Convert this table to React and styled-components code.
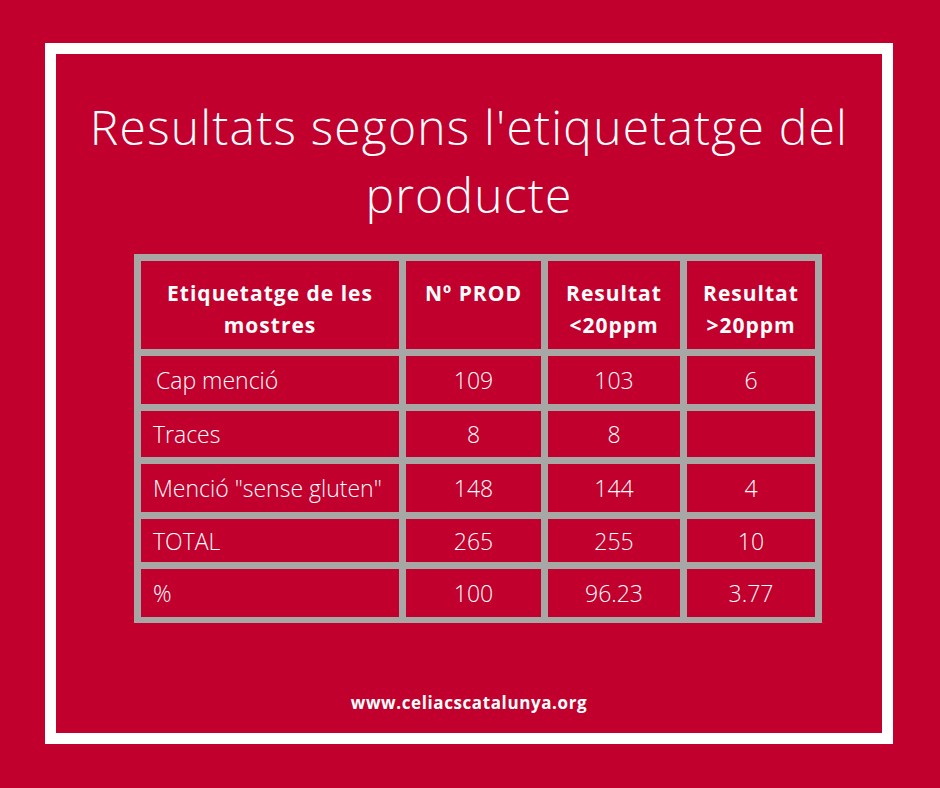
import React from 'react'
import styled, { createGlobalStyle } from 'styled-components'

const RED = '#c1002d'
const GRID = '#a7a7a5'

const GlobalStyle = createGlobalStyle`
  html, body {
    margin: 0;
    padding: 0;
    background: ${RED};
  }
  body {
    width: 940px;
    height: 788px;
    overflow: hidden;
    font-family: 'Open Sans', 'Lato', sans-serif;
    color: #fff;
  }
`

const ROWS = [
  { label: 'Cap menció', prod: '109', low: '103', high: '6', indent: 15 },
  { label: 'Traces', prod: '8', low: '8', high: '' },
  { label: 'Menció "sense gluten"', prod: '148', low: '144', high: '4' },
  { label: 'TOTAL', prod: '265', low: '255', high: '10' },
  { label: '%', prod: '100', low: '96.23', high: '3.77' },
]

function App() {
  return (
    <>
      <GlobalStyle />
      <Page>
        <Frame>
          <Title>
            Resultats segons l'etiquetatge del
            <br />
            producte
          </Title>
          <Table>
            <HeadCell>Etiquetatge de les mostres</HeadCell>
            <HeadCell>Nº PROD</HeadCell>
            <HeadCell>Resultat &lt;20ppm</HeadCell>
            <HeadCell>Resultat &gt;20ppm</HeadCell>
            {ROWS.map((row, index) => (
              <React.Fragment key={index}>
                <LabelCell $indent={row.indent}>{row.label}</LabelCell>
                <NumCell>{row.prod}</NumCell>
                <NumCell>{row.low}</NumCell>
                <NumCell>{row.high}</NumCell>
              </React.Fragment>
            ))}
          </Table>
          <Footer>www.celiacscatalunya.org</Footer>
        </Frame>
      </Page>
    </>
  )
}

export default App

const Page = styled.div`
  padding: 43px 0 0 45px;
`

const Frame = styled.div`
  box-sizing: border-box;
  width: 848px;
  height: 701px;
  border: 11px solid #fff;
  display: flex;
  flex-direction: column;
`

const Title = styled.h1`
  margin: 39px 0 0;
  font-size: 48px;
  font-weight: 300;
  line-height: 68px;
  letter-spacing: 1.2px;
  text-align: center;
`

const Table = styled.div`
  display: grid;
  grid-template-columns: 258px 135px 132px 128px;
  grid-template-rows: 88px 48px 46px 48px 43px 48px;
  column-gap: 7px;
  row-gap: 7px;
  align-self: flex-start;
  margin: 25px 0 0 78px;
  padding: 7px 7px 6px;
  background: ${GRID};
`

const Cell = styled.div`
  background: ${RED};
  display: flex;
  font-size: 23px;
  font-weight: 300;
`

const HeadCell = styled(Cell)`
  justify-content: center;
  align-items: flex-start;
  padding: 16px 4px 0;
  font-size: 21px;
  font-weight: 700;
  line-height: 32px;
  letter-spacing: 1px;
  text-align: center;
`

const LabelCell = styled(Cell)`
  align-items: center;
  padding-left: ${(props) => props.$indent || 12}px;
`

const NumCell = styled(Cell)`
  align-items: center;
  justify-content: center;
`

const Footer = styled.div`
  margin-top: auto;
  margin-bottom: 19px;
  text-align: center;
  font-size: 17px;
  font-weight: 700;
  letter-spacing: 0.6px;
`
